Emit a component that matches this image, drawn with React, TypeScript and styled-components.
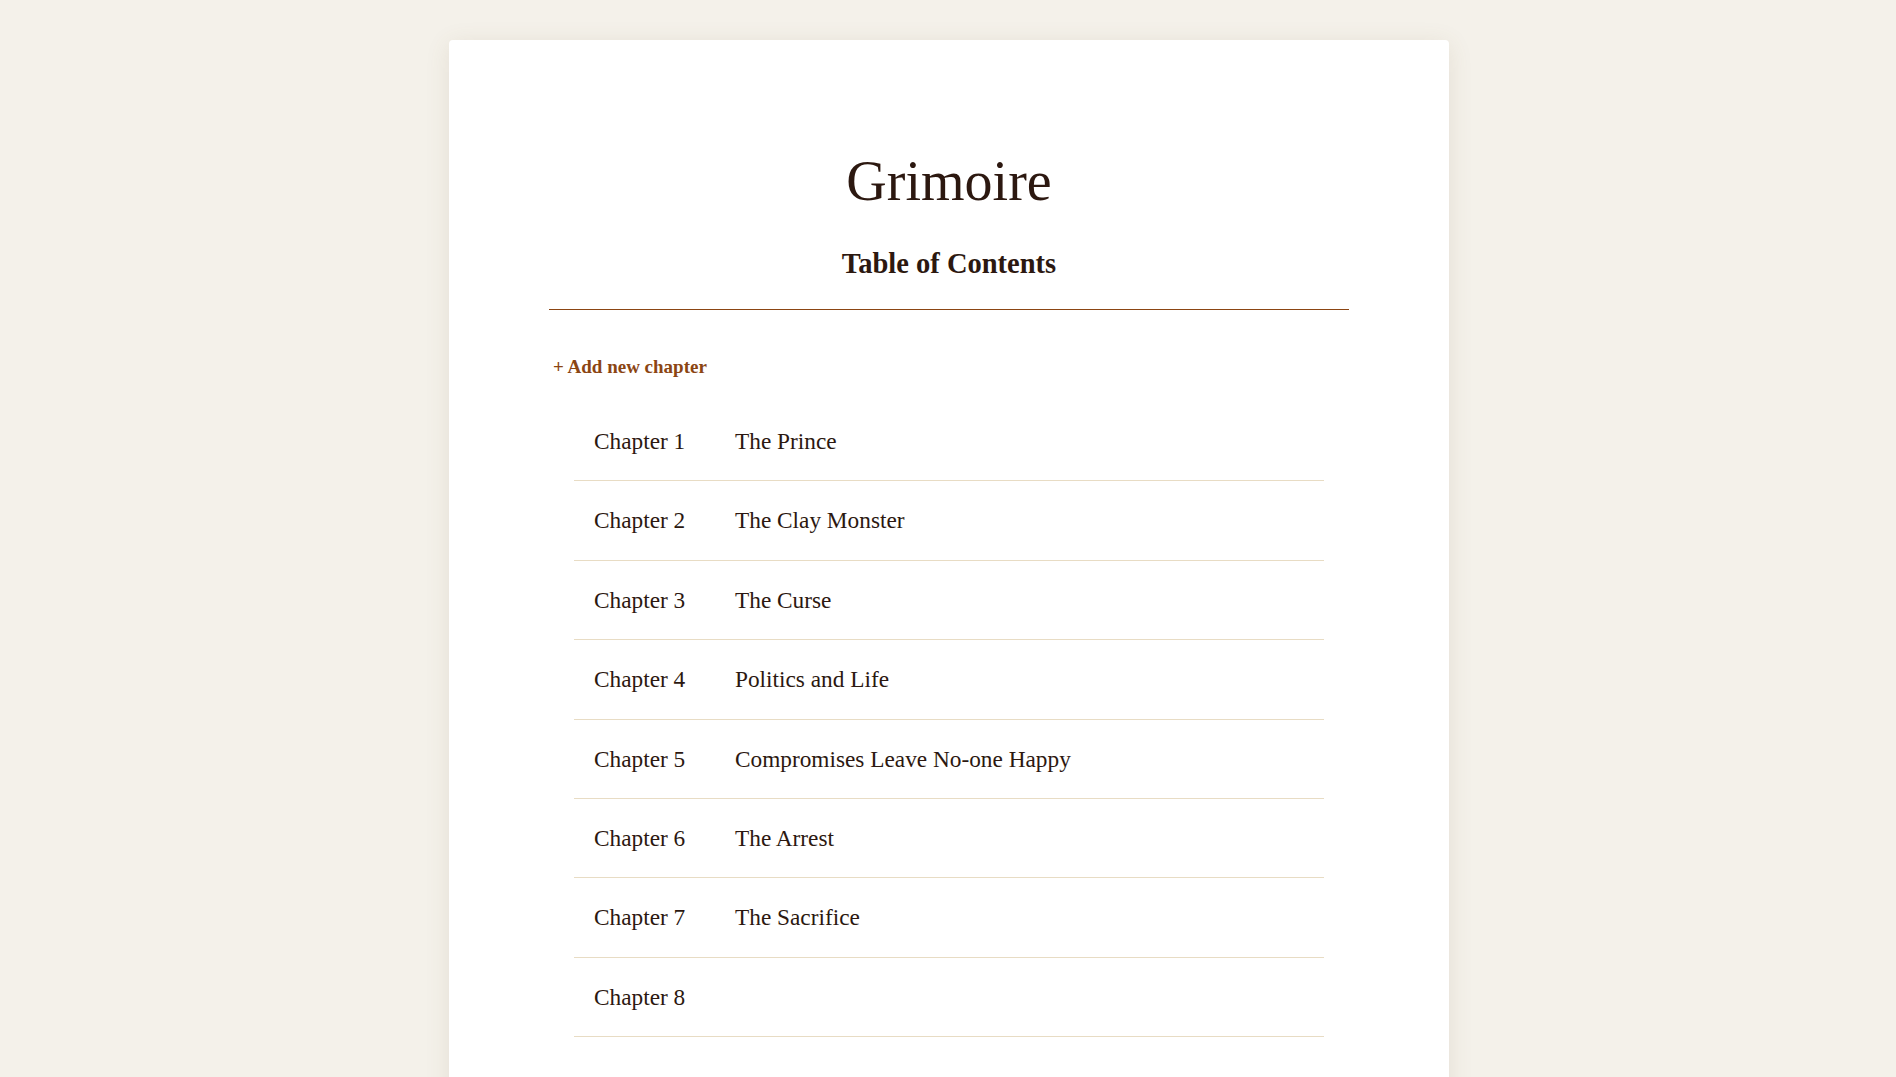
import React from "react";
import styled, { createGlobalStyle } from "styled-components";

const GlobalStyle = createGlobalStyle`
  html, body {
    margin: 0;
    padding: 0;
    background: #f4f1ea;
  }
  body {
    font-family: "Liberation Serif", "DejaVu Serif", serif;
    color: #2c1810;
  }
  * { box-sizing: border-box; }
`;

const Page = styled.div`
  display: flex;
  justify-content: center;
  padding: 40px 0 0 2px;
`;

const Card = styled.main`
  width: 1000px;
  background: #ffffff;
  border-radius: 4px;
  box-shadow: 0 4px 24px rgba(120, 100, 60, 0.12);
  padding: 108px 100px 80px;
  display: flex;
  flex-direction: column;
`;

const Header = styled.header`
  display: flex;
  flex-direction: column;
  align-items: center;
  border-bottom: 1px solid #8b4513;
  padding-bottom: 27px;
`;

const Title = styled.h1`
  margin: 0;
  font-family: "Liberation Serif", serif;
  font-weight: 400;
  font-size: 56px;
  line-height: 67px;
  color: #2c1810;
`;

const Subtitle = styled.h2`
  margin: 31px 0 0;
  font-family: "Liberation Serif", serif;
  font-weight: 700;
  font-size: 28.5px;
  line-height: 36px;
  color: #2c1810;
`;

const AddButton = styled.button`
  align-self: flex-start;
  margin: 44px 0 0 4px;
  padding: 0;
  border: none;
  background: none;
  font-family: "Liberation Serif", serif;
  font-weight: 700;
  font-size: 19px;
  line-height: 26px;
  color: #8b4513;
  cursor: pointer;
`;

const ChapterList = styled.ol`
  list-style: none;
  margin: 22px 25px 0;
  padding: 0;
`;

const ChapterRow = styled.li`
  display: flex;
  align-items: center;
  padding: 24px 20px;
  border-bottom: 1px solid #e8dcc4;
  font-size: 23.3px;
  line-height: 30.4px;
  color: #2c1810;
`;

const ChapterLabel = styled.span`
  width: 141px;
  flex-shrink: 0;
`;

const ChapterName = styled.span`
  flex: 1;
`;

const chapters = [
  "The Prince",
  "The Clay Monster",
  "The Curse",
  "Politics and Life",
  "Compromises Leave No-one Happy",
  "The Arrest",
  "The Sacrifice",
  "",
];

export default function App() {
  return (
    <>
      <GlobalStyle />
      <Page>
        <Card>
          <Header>
            <Title>Grimoire</Title>
            <Subtitle>Table of Contents</Subtitle>
          </Header>
          <AddButton>+ Add new chapter</AddButton>
          <ChapterList>
            {chapters.map((name, i) => (
              <ChapterRow key={i}>
                <ChapterLabel>Chapter {i + 1}</ChapterLabel>
                <ChapterName>{name}</ChapterName>
              </ChapterRow>
            ))}
          </ChapterList>
        </Card>
      </Page>
    </>
  );
}
